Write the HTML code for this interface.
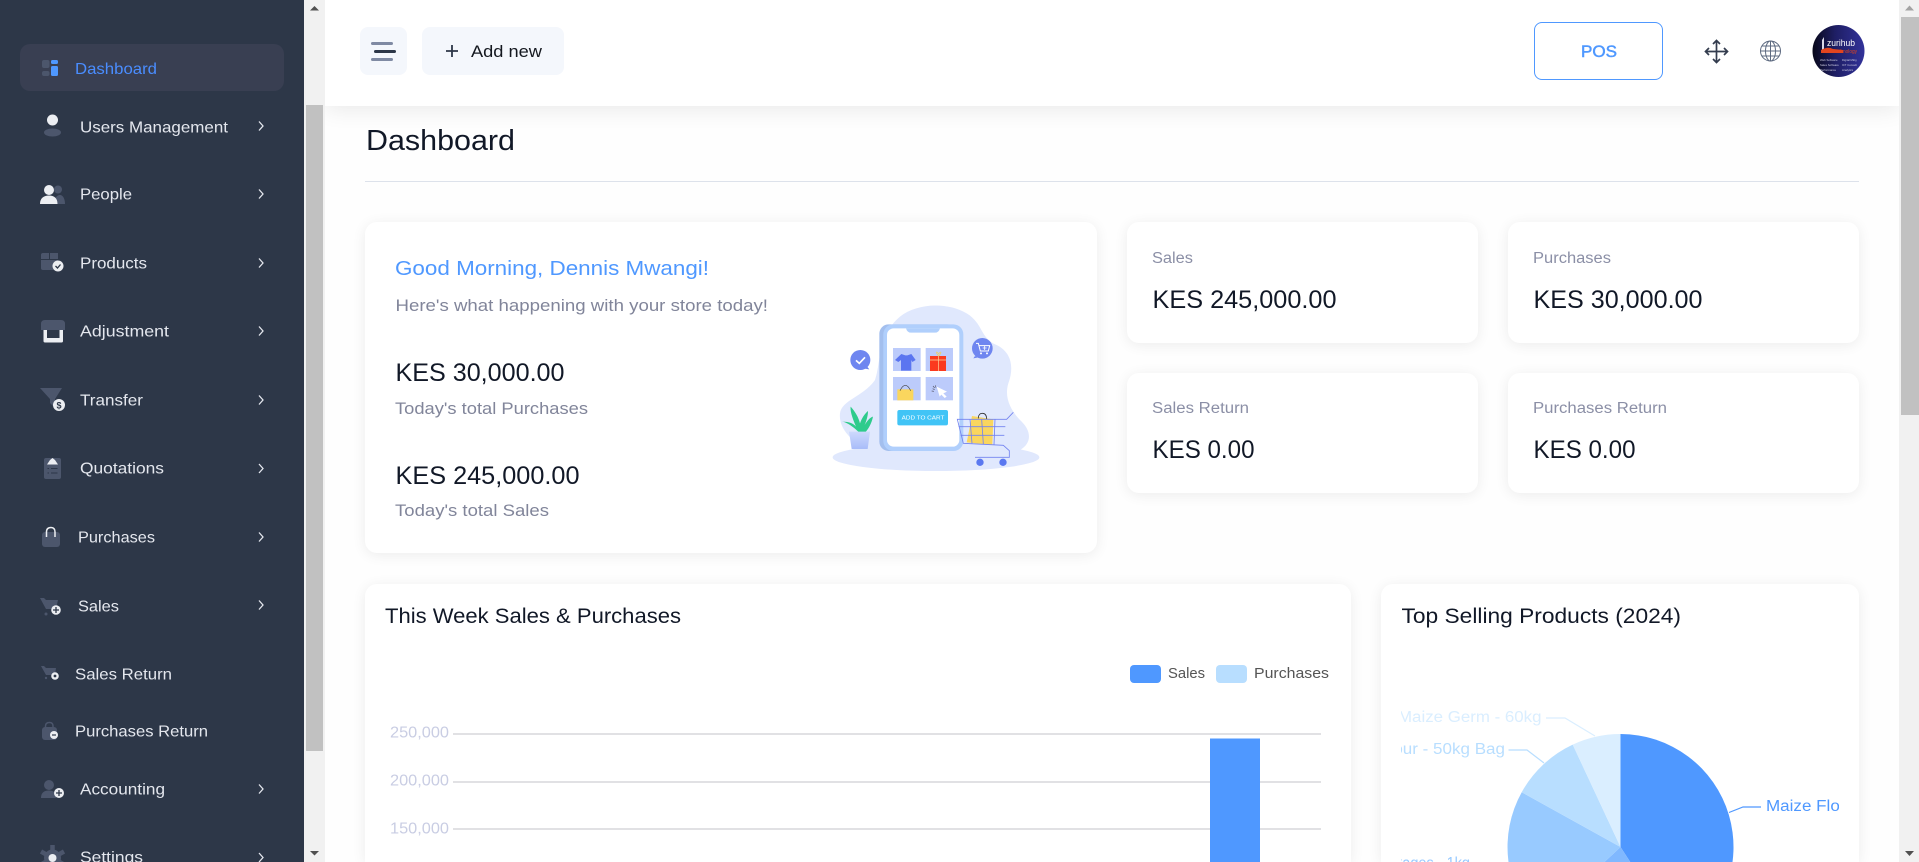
<!DOCTYPE html>
<html><head><meta charset="utf-8"><title>Dashboard</title>
<style>
html,body{margin:0;padding:0;width:1919px;height:862px;overflow:hidden;background:#fff}
div{position:absolute;box-sizing:border-box}
.card{background:#fff;border-radius:12px;box-shadow:0 2px 14px rgba(0,0,0,.075)}
svg{position:absolute;left:0;top:0}
text{font-family:"Liberation Sans",sans-serif}
.n text{fill:#e4e7ee;font-size:16px}
.h{fill:#111827}
.g{fill:#81859a}
</style></head><body>
<div style="left:0;top:0;width:1919px;height:862px;overflow:hidden;contain:strict">
<div style="left:325px;top:0;width:1574px;height:862px;background:#fefefe"></div>
<div class="card" style="left:365px;top:222px;width:732px;height:331px"></div>
<div class="card" style="left:1127px;top:222px;width:351px;height:121px"></div>
<div class="card" style="left:1508px;top:222px;width:351px;height:121px"></div>
<div class="card" style="left:1127px;top:373px;width:351px;height:120px"></div>
<div class="card" style="left:1508px;top:373px;width:351px;height:120px"></div>
<div class="card" style="left:365px;top:584px;width:986px;height:278px;border-radius:12px 12px 0 0"></div>
<div class="card" style="left:1381px;top:584px;width:478px;height:278px;border-radius:12px 12px 0 0"></div>
<div style="left:325px;top:0;width:1574px;height:106px;background:#fff;box-shadow:0 3px 22px rgba(0,0,0,.09)"></div>
<div style="left:0;top:0;width:304px;height:862px;background:#2d3748"></div>
<div style="left:304px;top:0;width:21px;height:862px;background:#f1f1f1"></div>
<div style="left:306px;top:105px;width:17px;height:646px;background:#c1c1c1"></div>
<div style="left:1899px;top:0;width:20px;height:862px;background:#f1f1f1"></div>
<div style="left:1901px;top:17px;width:18px;height:398px;background:#c1c1c1"></div>
<div style="left:20px;top:44px;width:264px;height:47px;border-radius:10px;background:#393f52"></div>
<div style="left:360px;top:27px;width:47px;height:48px;border-radius:8px;background:#f4f7fc"></div>
<div style="left:422px;top:27px;width:142px;height:48px;border-radius:8px;background:#f4f7fc"></div>
<div style="left:1534px;top:22px;width:129px;height:58px;border-radius:8px;border:1px solid #4f98ff;background:#fff"></div>
<div style="left:365px;top:181px;width:1494px;height:1px;background:#dde2eb"></div>

<svg width="1919" height="862" viewBox="0 0 1919 862">
<defs>
<clipPath id="pc"><rect x="1401" y="640" width="438" height="222"/></clipPath>
<linearGradient id="av" x1="0" x2="1" y1="0" y2="0"><stop offset="0" stop-color="#08081a"/><stop offset=".45" stop-color="#1f1f66"/><stop offset="1" stop-color="#32329a"/></linearGradient>
<linearGradient id="pot" x1="0" x2="0" y1="0" y2="1"><stop offset="0" stop-color="#cdd9fd"/><stop offset="1" stop-color="#a8bcf9"/></linearGradient>
<clipPath id="avc"><circle cx="1838.5" cy="51" r="26"/></clipPath>
</defs>

<!-- scrollbar arrows -->
<path d="M310 10.5L314.5 6L319 10.5Z" fill="#505050"/>
<path d="M310 851L319 851L314.5 855.5Z" fill="#505050"/>
<path d="M1905 10.5L1909.5 5.5L1914 10.5Z" fill="#a3a3a3"/>
<path d="M1905 851L1914 851L1909.5 856Z" fill="#505050"/>

<!-- sidebar icons -->
<rect x="42" y="60" width="7.5" height="8" rx="2" fill="#4c566c"/><rect x="42" y="71" width="7.5" height="5" rx="2" fill="#4c566c"/>
<rect x="51" y="60" width="7" height="4" rx="1.5" fill="#4f98ff"/><rect x="51" y="66" width="7" height="10" rx="1.5" fill="#4f98ff"/>
<circle cx="52.5" cy="120" r="5.5" fill="#eceef2"/><ellipse cx="52.5" cy="132.5" rx="8.5" ry="4" fill="#4c566c"/>
<circle cx="58" cy="189.5" r="4" fill="#4c566c"/><path d="M54 204C54 197 58 195 60 195C63 195 65 199 65 204Z" fill="#4c566c"/>
<circle cx="49" cy="190" r="5" fill="#eceef2"/><path d="M40 204C40 198 44 195.5 49 195.5C54 195.5 57.500 198 57.500 204Z" fill="#eceef2"/>
<path d="M43 253H58V270H43Q41 270 41 268V255Q41 253 43 253Z" fill="#4c566c"/><path d="M41 259.500H58M49.500 253V259" stroke="#2d3748" stroke-width="1"/>
<circle cx="58" cy="266" r="5.500" fill="#eceef2"/><path d="M55.500 266L57.500 268L60.500 264.500" fill="none" stroke="#2d3748" stroke-width="1.300"/>
<path d="M45 320H61Q65 320 65 324V330H41V324Q41 320 45 320Z" fill="#4c566c"/><path d="M43.500 330H63V341Q63 342.500 61.500 342.500H45Q43.500 342.500 43.500 341Z" fill="#eceef2"/><rect x="47" y="330" width="12.500" height="8" fill="#2d3748"/>
<path d="M40 388H62L55 399V408L50 403V399Z" fill="#4c566c"/><circle cx="59" cy="405" r="6" fill="#eceef2"/><text x="59" y="408.500" text-anchor="middle" font-size="9" font-weight="700" fill="#2d3748">$</text>
<rect x="44" y="458" width="17" height="21" rx="2" fill="#4c566c"/><path d="M47 464.500L50 460L52.500 458L55 460L58 464.500Z" fill="#eceef2"/>
<path d="M47.500 468.500H49M47.500 473H49M51 468.500H57.500M51 473H57.500" stroke="#2d3748" stroke-width="1"/>
<rect x="42" y="532" width="18" height="15" rx="3" fill="#4c566c"/><path d="M46.500 537V532Q46.500 527.500 51 527.500Q55 527.500 55 532V537" fill="none" stroke="#eceef2" stroke-width="1.500"/>
<path d="M40 598H44L46 600H58L56 609H46Z" fill="#4c566c"/><circle cx="46" cy="614" r="1.500" fill="#4c566c"/><circle cx="56" cy="610" r="4.800" fill="#eceef2"/><path d="M53 610H59M56 607V613" stroke="#2d3748" stroke-width="1.300"/>
<path d="M41 666H44L46 668H56L55 675H46Z" fill="#4c566c"/><circle cx="46" cy="678" r="1.200" fill="#4c566c"/><circle cx="55" cy="676" r="3.800" fill="#eceef2"/><circle cx="55" cy="676" r="1.400" fill="#2d3748"/>
<rect x="42" y="727" width="15" height="13" rx="3" fill="#4c566c"/><path d="M45.500 729V726Q45.500 722.500 49.500 722.500Q53 722.500 53 726V729" fill="none" stroke="#4c566c" stroke-width="1.500"/><circle cx="54" cy="735" r="4" fill="#eceef2"/><path d="M52 735H56" stroke="#2d3748" stroke-width="1.200"/>
<circle cx="49" cy="785" r="5" fill="#4c566c"/><path d="M41 798C41 792 45 790.500 49 790.500C53 790.500 56 792 56 798Z" fill="#4c566c"/><circle cx="59" cy="793" r="5" fill="#eceef2"/><path d="M56 793H62M59 790V796" stroke="#2d3748" stroke-width="1.300"/>
<circle cx="52.500" cy="858" r="8.500" fill="#4c566c"/><path d="M52.500 845V871M41 851.500L64 864.500M41 864.500L64 851.500" stroke="#4c566c" stroke-width="4.500"/><circle cx="52.500" cy="858" r="4" fill="#eceef2"/>
<g fill="none" stroke="#e4e7ee" stroke-width="1.300">
<path d="M259 121.500L263 126L259 130.500"/><path d="M259 189.500L263 194L259 198.500"/><path d="M259 258.500L263 263L259 267.500"/><path d="M259 326.500L263 331L259 335.500"/><path d="M259 395.500L263 400L259 404.500"/><path d="M259 464L263 468.500L259 473"/><path d="M259 532.500L263 537L259 541.500"/><path d="M259 600.500L263 605L259 609.500"/><path d="M259 784.500L263 789L259 793.500"/><path d="M259 853L263 857.500L259 862"/>
</g>
<!-- sidebar text -->
<text x="75" y="74" textLength="82" lengthAdjust="spacingAndGlyphs" font-size="16" fill="#4a8dff">Dashboard</text>
<g class="n" transform="translate(0 -.5)">
<text x="80" y="133" textLength="148" lengthAdjust="spacingAndGlyphs">Users Management</text>
<text x="80" y="200" textLength="52" lengthAdjust="spacingAndGlyphs">People</text>
<text x="80" y="269" textLength="67" lengthAdjust="spacingAndGlyphs">Products</text>
<text x="80" y="337" textLength="89" lengthAdjust="spacingAndGlyphs">Adjustment</text>
<text x="80" y="406" textLength="63" lengthAdjust="spacingAndGlyphs">Transfer</text>
<text x="80" y="474" textLength="84" lengthAdjust="spacingAndGlyphs">Quotations</text>
<text x="78" y="543" textLength="77" lengthAdjust="spacingAndGlyphs">Purchases</text>
<text x="78" y="612" textLength="41" lengthAdjust="spacingAndGlyphs">Sales</text>
<text x="75" y="680" textLength="97" lengthAdjust="spacingAndGlyphs">Sales Return</text>
<text x="75" y="737" textLength="133" lengthAdjust="spacingAndGlyphs">Purchases Return</text>
<text x="80" y="795" textLength="85" lengthAdjust="spacingAndGlyphs">Accounting</text>
<text x="80" y="863" textLength="63" lengthAdjust="spacingAndGlyphs">Settings</text>
</g>

<!-- topbar -->
<path d="M372.500 43.500H391.500M372.500 59.500H391.500" stroke="#7f8aa3" stroke-width="3" stroke-linecap="round"/>
<path d="M375.500 51.500H394.500" stroke="#2d3748" stroke-width="3" stroke-linecap="round"/>
<path d="M452 45V57M446 51H458" stroke="#2d3748" stroke-width="1.800"/>
<text x="471" y="57" textLength="71" lengthAdjust="spacingAndGlyphs" font-size="17" fill="#14181f">Add new</text>
<text x="1581" y="57" textLength="36" lengthAdjust="spacingAndGlyphs" font-size="17" fill="#4f98ff" stroke="#4f98ff" stroke-width=".5">POS</text>
<g fill="none" stroke="#333c4e" stroke-width="1.700">
<path d="M1716.500 41V62M1706 51.500H1727"/><path d="M1713 44L1716.500 40.500L1720 44M1713 59L1716.500 62.500L1720 59M1709 48L1705.500 51.500L1709 55M1724 48L1727.500 51.500L1724 55"/>
</g>
<g fill="none" stroke="#5d6a80" stroke-width="1">
<circle cx="1770.500" cy="51" r="10"/><ellipse cx="1770.500" cy="51" rx="5" ry="10"/><path d="M1760.500 51H1780.500M1770.500 41V61M1762 46H1779M1762 56H1779"/>
</g>
<circle cx="1838.500" cy="51" r="26" fill="url(#av)"/>
<g clip-path="url(#avc)">
<path d="M1822 40L1824 37V49H1833V52H1822Z" fill="#d9d9e6"/><path d="M1821 50Q1828 46 1833 49L1843 50V53H1821Z" fill="#e2451f"/>
<text x="1827" y="46" font-size="9.500" fill="#fff" textLength="28" lengthAdjust="spacingAndGlyphs">zurihub</text>
<text x="1834" y="53" font-size="5.500" fill="#e2451f" textLength="23" lengthAdjust="spacingAndGlyphs">technology</text>
<g fill="#c9c9de" font-size="2.800"><text x="1820" y="61">Web Software</text><text x="1842" y="61">Digital Mktg</text><text x="1820" y="66">Sales Software</text><text x="1842" y="66">ICT Consult</text><text x="1820" y="71">Performance</text><text x="1842" y="71">Analytics</text></g>
</g>

<!-- page text -->
<text x="366" y="150" textLength="149" lengthAdjust="spacingAndGlyphs" font-size="29" class="h">Dashboard</text>
<text x="395" y="275" textLength="314" lengthAdjust="spacingAndGlyphs" font-size="20.500" fill="#4f98ff">Good Morning, Dennis Mwangi!</text>
<text x="395.500" y="311" textLength="372.500" lengthAdjust="spacingAndGlyphs" font-size="17" class="g">Here's what happening with your store today!</text>
<text x="395.500" y="381" textLength="169" lengthAdjust="spacingAndGlyphs" font-size="25" class="h">KES 30,000.00</text>
<text x="395" y="414" textLength="193" lengthAdjust="spacingAndGlyphs" font-size="17" class="g">Today's total Purchases</text>
<text x="395.500" y="484" textLength="184" lengthAdjust="spacingAndGlyphs" font-size="25" class="h">KES 245,000.00</text>
<text x="395" y="516" textLength="154" lengthAdjust="spacingAndGlyphs" font-size="17" class="g">Today's total Sales</text>

<text x="1152" y="263" textLength="41" lengthAdjust="spacingAndGlyphs" font-size="15.500" fill="#8b8fa6">Sales</text>
<text x="1152.500" y="308" textLength="184" lengthAdjust="spacingAndGlyphs" font-size="25" class="h">KES 245,000.00</text>
<text x="1533" y="263" textLength="78" lengthAdjust="spacingAndGlyphs" font-size="15.500" fill="#8b8fa6">Purchases</text>
<text x="1533.500" y="308" textLength="169" lengthAdjust="spacingAndGlyphs" font-size="25" class="h">KES 30,000.00</text>
<text x="1152" y="413" textLength="97" lengthAdjust="spacingAndGlyphs" font-size="15.500" fill="#8b8fa6">Sales Return</text>
<text x="1152.500" y="458" textLength="102" lengthAdjust="spacingAndGlyphs" font-size="25" class="h">KES 0.00</text>
<text x="1533" y="413" textLength="134" lengthAdjust="spacingAndGlyphs" font-size="15.500" fill="#8b8fa6">Purchases Return</text>
<text x="1533.500" y="458" textLength="102" lengthAdjust="spacingAndGlyphs" font-size="25" class="h">KES 0.00</text>

<!-- illustration -->
<g transform="translate(800 280) scale(.33333)">
<ellipse cx="408" cy="532" rx="310" ry="41" fill="#e0e8fd"/>
<path d="M215 505C150 490 115 440 120 400C125 360 190 350 225 300C245 240 230 170 300 110C350 70 440 65 500 100C550 130 540 175 590 195C640 220 640 270 625 310C610 360 640 400 665 425C695 455 695 490 660 510Z" fill="#e0e8fd"/>
<rect x="238" y="133" width="232" height="380" rx="28" fill="#a3bfee"/>
<rect x="250" y="133" width="240" height="380" rx="30" fill="#b0cffc"/>
<rect x="261" y="145" width="217" height="355" rx="20" fill="#fff"/>
<path d="M318 145H420Q416 158 405 158H333Q322 158 318 145Z" fill="#b0cffc"/>
<rect x="279" y="204" width="83" height="69" fill="#bccbfb"/><rect x="377" y="204" width="82" height="69" fill="#bccbfb"/><rect x="279" y="291" width="83" height="70" fill="#bccbfb"/><rect x="377" y="291" width="82" height="70" fill="#bccbfb"/>
<path d="M304 222L316 226H322L334 222L347 240L337 246L334 240V272H303V240L295 246L285 240Z" fill="#5b75f0"/>
<rect x="390" y="228" width="48" height="45" fill="#fb3a1f"/><path d="M416 228V273M390 240H438" stroke="#fcd9a0" stroke-width="2"/><path d="M416 228C405 215 410 212 416 222C422 212 428 215 416 228" fill="none" stroke="#f6cf5a" stroke-width="2"/>
<rect x="292" y="328" width="48" height="33" fill="#fad65e"/><path d="M300 332Q316 300 332 332" fill="none" stroke="#444" stroke-width="2"/>
<path d="M410 320L441 335L430 340L440 350L434 354L424 344L419 350Z" fill="#fff"/><path d="M398 326L404 329M395 333L402 334M406 316L408 323M399 318L404 324" stroke="#556" stroke-width="2"/>
<rect x="292" y="390" width="152" height="46" rx="6" fill="#41c4f6"/>
<text x="305" y="419" textLength="128" lengthAdjust="spacingAndGlyphs" font-size="17" fill="#fff">ADD TO CART</text>
<path d="M190 265L208 268L198 255Z" fill="#6f86f0"/><circle cx="181" cy="240" r="30" fill="#6f86f0"/><path d="M168 241L178 250L195 232" fill="none" stroke="#fff" stroke-width="5"/>
<path d="M525 228L520 235L535 232Z" fill="#6f86f0"/><circle cx="547" cy="205" r="31" fill="#6f86f0"/><path d="M528 190H535L541 213H565L569 197H537" fill="none" stroke="#fff" stroke-width="3"/><circle cx="543" cy="220" r="3" fill="#fff"/><circle cx="561" cy="220" r="3" fill="#fff"/><path d="M548 204H560M554 198V210" stroke="#fff" stroke-width="2.500"/>
<path d="M178 458C150 430 130 425 126 425C150 425 162 432 168 440C155 410 150 390 152 380C165 395 175 410 180 430C185 415 195 400 204 393C204 410 198 425 194 435C200 425 210 412 219 410C215 430 205 448 195 458Z" fill="#2ecb8c"/>
<path d="M147 455H210L203 507H155Z" fill="url(#pot)"/>
<path d="M516 408L580 418L577 495L500 487Z" fill="#fad65e"/><path d="M535 415Q535 400 547 400Q560 400 560 418" fill="none" stroke="#333" stroke-width="2.500"/>
<g fill="none" stroke="#7282f0" stroke-width="2.500"><path d="M640 397L620 418H472L490 490L610 496L628 512V532H525"/><path d="M476 440H616M482 466H613M510 418L516 490M545 418L550 492M585 418L582 494"/></g>
<circle cx="540" cy="547" r="11" fill="#5a78f0"/><circle cx="609" cy="547" r="11" fill="#5a78f0"/>
</g>

<!-- bar chart -->
<text x="385" y="623" textLength="296" lengthAdjust="spacingAndGlyphs" font-size="21" class="h">This Week Sales &amp; Purchases</text>
<rect x="1130" y="665" width="31" height="18" rx="4" fill="#4f98ff"/>
<text x="1168" y="678" textLength="37" lengthAdjust="spacingAndGlyphs" font-size="14.500" fill="#555">Sales</text>
<rect x="1216" y="665" width="31" height="18" rx="4" fill="#b8deff"/>
<text x="1254" y="678" textLength="75" lengthAdjust="spacingAndGlyphs" font-size="14.500" fill="#555">Purchases</text>
<g fill="#c9cde3" font-size="15.500">
<text x="390" y="737.500" textLength="59" lengthAdjust="spacingAndGlyphs">250,000</text>
<text x="390" y="785.500" textLength="59" lengthAdjust="spacingAndGlyphs">200,000</text>
<text x="390" y="833.500" textLength="59" lengthAdjust="spacingAndGlyphs">150,000</text>
</g>
<path d="M453 734H1321M453 782H1321M453 829H1321" stroke="#cfcfd4" stroke-width="1.200"/>
<rect x="1210" y="738.500" width="50" height="124" fill="#4f98ff"/>

<!-- pie -->
<text x="1401.500" y="623" textLength="279.500" lengthAdjust="spacingAndGlyphs" font-size="21" class="h">Top Selling Products (2024)</text>
<path d="M1620.500 847V734A113 113 0 0 1 1682 941.800Z" fill="#4f98ff"/>
<path d="M1620.500 847L1682 941.800A113 113 0 0 1 1537.900 924.100Z" fill="#80b8ff"/>
<path d="M1620.500 847L1537.900 924.100A113 113 0 0 1 1521.700 792.200Z" fill="#98caff"/>
<path d="M1620.500 847L1521.700 792.200A113 113 0 0 1 1572.700 744.600Z" fill="#b8deff"/>
<path d="M1620.500 847L1572.700 744.600A113 113 0 0 1 1620.500 734Z" fill="#daeeff"/>
<g fill="none" stroke-width="1.200">
<path d="M1546 718H1565L1595 736" stroke="#daeeff"/>
<path d="M1508.500 750H1527L1544 763" stroke="#b8deff"/>
<path d="M1729 812.500L1743 807H1761" stroke="#4f98ff"/>
</g>
<g clip-path="url(#pc)" font-size="15.500">
<text x="1398" y="722" textLength="143.500" lengthAdjust="spacingAndGlyphs" fill="#daeeff">Maize Germ - 60kg</text>
<text x="1329" y="754" textLength="176" lengthAdjust="spacingAndGlyphs" fill="#b8deff">Maize Flour - 50kg Bag</text>
<text x="1766" y="811" textLength="176" lengthAdjust="spacingAndGlyphs" fill="#4f98ff">Maize Flour - 25kg Bag</text>
<text x="1370" y="868" textLength="100" lengthAdjust="spacingAndGlyphs" fill="#98caff">Packages - 1kg</text>
</g>
</svg>
</div>
</body></html>
